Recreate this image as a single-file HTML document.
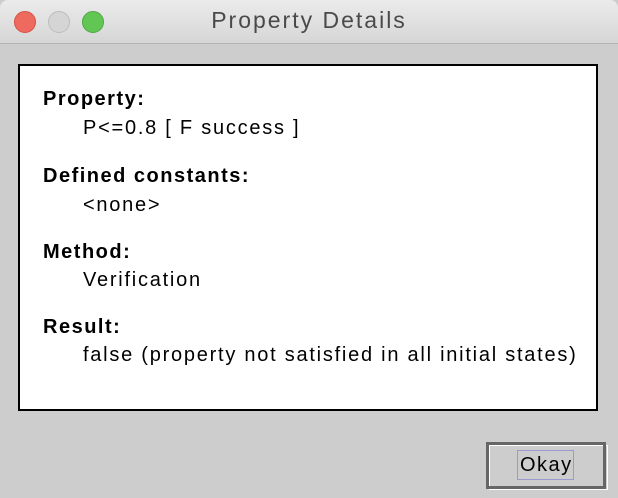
<!DOCTYPE html>
<html><head><style>
body{margin:0;width:618px;height:498px;background:#cdcdcd;font-family:"Liberation Sans",sans-serif;position:relative;overflow:hidden}
.tb{position:absolute;left:0;top:0;width:618px;height:43px;background:linear-gradient(#ebebeb,#d6d6d6);border-bottom:1px solid #b4b4b4;border-radius:8px 8px 0 0}
.dot{position:absolute;top:11px;width:20px;height:20px;border-radius:50%}
.title{position:absolute;top:7px;left:0;width:618px;text-align:center;font-size:23px;color:#4a4a4a;letter-spacing:2px}
.panel{position:absolute;left:18px;top:64px;width:576px;height:343px;background:#fff;border:2px solid #000}
.t{position:absolute;font-size:20px;color:#000;white-space:pre;letter-spacing:1.75px}
.b{font-weight:bold;letter-spacing:1.5px}
</style></head><body>
<div class="tb">
<div class="dot" style="left:14px;background:#ee6a5f;border:1px solid #d65045"></div>
<div class="dot" style="left:48px;background:#d5d5d5;border:1px solid #bcbcbc"></div>
<div class="dot" style="left:82px;background:#62c655;border:1px solid #4fa844"></div>
<div class="title">Property Details</div>
</div>
<div class="panel"></div>
<div class="t b" style="left:43px;top:88px">Property:</div>
<div class="t" style="left:83px;top:117px">P&lt;=0.8 [ F success ]</div>
<div class="t b" style="left:43px;top:165px">Defined constants:</div>
<div class="t" style="left:83px;top:194px">&lt;none&gt;</div>
<div class="t b" style="left:43px;top:241px">Method:</div>
<div class="t" style="left:83px;top:269px">Verification</div>
<div class="t b" style="left:43px;top:316px">Result:</div>
<div class="t" style="left:83px;top:344px">false (property not satisfied in all initial states)</div>
<div style="position:absolute;left:489px;top:445px;width:117px;height:43px;border:1px solid #fff"></div>
<div style="position:absolute;left:486px;top:442px;width:114px;height:41px;border:3px solid #666"></div>
<div style="position:absolute;left:517px;top:450px;width:55px;height:28px;border:1px solid #9a9ad0"></div>
<div class="t" style="left:520px;top:454px;letter-spacing:1.5px">Okay</div>
</body></html>
